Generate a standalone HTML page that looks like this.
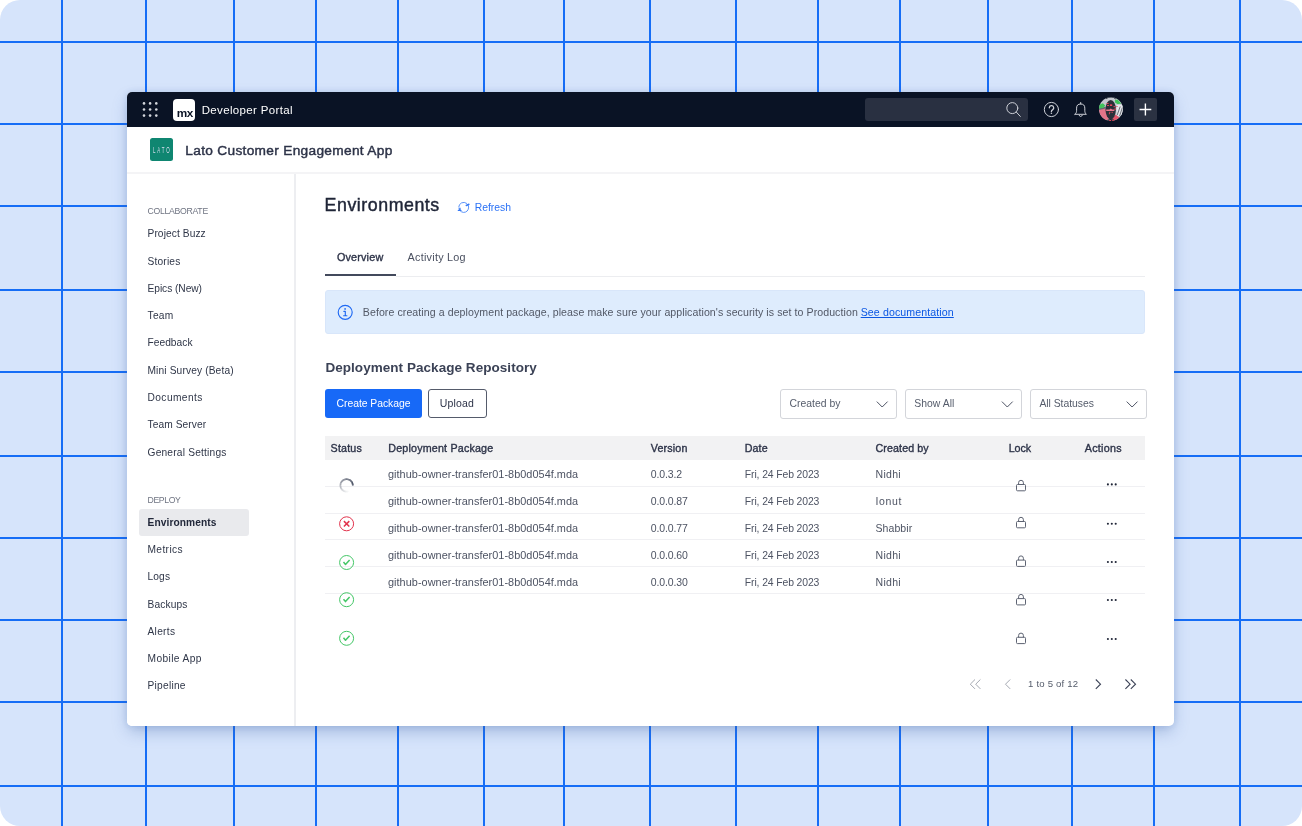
<!DOCTYPE html>
<html lang="en">
<head>
<meta charset="utf-8">
<title>Developer Portal - Environments</title>
<style>
html,body{margin:0;padding:0;background:#fff;}
body{width:1302px;height:826px;overflow:hidden;font-family:"Liberation Sans",Arial,sans-serif;}
.stage{position:absolute;left:0;top:0;width:1302px;height:826px;background:#d6e4fb;border-radius:20px;overflow:hidden;}
.gv,.gh{position:absolute;background:#166df6;}
.gv{top:0;width:2px;height:826px;}
.gh{left:0;height:2px;width:1302px;}
.win{will-change:transform;position:absolute;left:127px;top:92px;width:1047px;height:634px;background:#fff;border-radius:5px;box-shadow:0 7px 16px -2px rgba(60,100,170,.36),0 0 7px rgba(60,100,170,.16);overflow:hidden;}
.t{position:absolute;white-space:nowrap;line-height:1;margin:0;padding:0;}
.abs{position:absolute;}
.topbar{position:absolute;left:0;top:0;width:1047px;height:34.5px;background:#0a1325;}
.apphead{position:absolute;left:0;top:34.5px;width:1047px;height:45.5px;background:#fff;border-bottom:2px solid #f4f4f6;}
.side{position:absolute;left:0;top:82px;width:167px;height:552px;border-right:2px solid #edeef1;background:#fff;}
.sel{position:absolute;left:11.6px;top:416.5px;width:110px;height:27.3px;border-radius:3px;background:#e9eaed;}
.alert{position:absolute;left:197.7px;top:198.2px;width:820.3px;height:43.6px;border-radius:3px;background:#deecfd;box-sizing:border-box;border:1px solid #d8e6fa;}
.btn{position:absolute;top:297.2px;height:29.2px;border-radius:3px;box-sizing:border-box;}
.btn.primary{left:197.7px;width:97.1px;background:#1769f7;}
.btn.ghost{left:301px;width:59px;background:#fff;border:1px solid #555b6b;}
.dd{position:absolute;top:297.2px;height:29.6px;width:116.7px;border:1px solid #d3d5da;border-radius:3px;box-sizing:border-box;background:#fff;}
.thead{position:absolute;left:197.8px;top:344px;width:820.3px;height:24px;background:#f2f2f3;}
.rl{position:absolute;left:197.8px;width:820.3px;height:1px;background:#f0f0f3;}
svg{position:absolute;overflow:visible;}
</style>
</head>
<body>
<div class="stage">
<div class="gv" style="left:61px"></div>
<div class="gv" style="left:145px"></div>
<div class="gv" style="left:233px"></div>
<div class="gv" style="left:315px"></div>
<div class="gv" style="left:397px"></div>
<div class="gv" style="left:483px"></div>
<div class="gv" style="left:563px"></div>
<div class="gv" style="left:649px"></div>
<div class="gv" style="left:735px"></div>
<div class="gv" style="left:817px"></div>
<div class="gv" style="left:899px"></div>
<div class="gv" style="left:987px"></div>
<div class="gv" style="left:1071px"></div>
<div class="gv" style="left:1153px"></div>
<div class="gv" style="left:1239px"></div>
<div class="gh" style="top:41px"></div>
<div class="gh" style="top:123px"></div>
<div class="gh" style="top:205px"></div>
<div class="gh" style="top:289px"></div>
<div class="gh" style="top:371px"></div>
<div class="gh" style="top:455px"></div>
<div class="gh" style="top:537px"></div>
<div class="gh" style="top:619px"></div>
<div class="gh" style="top:701px"></div>
<div class="gh" style="top:785px"></div>
<div class="win">
<header class="topbar">
<svg style="left:-127px;top:-92px" width="1302" height="826" fill="#d3d6dc"><circle cx="144.0" cy="103.4" r="1.3"/><circle cx="150.1" cy="103.4" r="1.3"/><circle cx="156.3" cy="103.4" r="1.3"/><circle cx="144.0" cy="109.5" r="1.3"/><circle cx="150.1" cy="109.5" r="1.3"/><circle cx="156.3" cy="109.5" r="1.3"/><circle cx="144.0" cy="115.6" r="1.3"/><circle cx="150.1" cy="115.6" r="1.3"/><circle cx="156.3" cy="115.6" r="1.3"/></svg>
<div class="abs" style="left:46.30000000000001px;top:6.5px;width:21.9px;height:22px;border-radius:4px;background:#fff"></div>
<span class="t" style="left:49.70px;top:16.15px;font-size:11.8px;font-weight:700;color:#0a1325;letter-spacing:-0.45px;">mx</span>
<span class="t" style="left:74.70px;top:13.15px;font-size:11.5px;font-weight:400;color:#ffffff;letter-spacing:0.350px;">Developer Portal</span>
<div class="abs" style="left:738px;top:6px;width:163px;height:23px;border-radius:3px;background:#293041"></div>
<svg style="left:-127px;top:-92px" width="1302" height="826" fill="none" stroke="#cdd0d7" stroke-width="1" stroke-linecap="round">
<circle cx="1012.3" cy="108.1" r="5.5"/><path d="M1016.3 112.1 L1020.3 116.4"/>
<circle cx="1051.4" cy="109.5" r="7.1"/>
<path d="M1049.3 107.8 a2.2 2.2 0 1 1 3.2 2 c-0.8 0.4 -1.1 0.8 -1.1 1.6" stroke-width="1.3"/>
<circle cx="1051.4" cy="113.2" r="0.8" fill="#cdd0d7" stroke="none"/>
<path d="M1075 114.3 h11.4 c-1.3 -1 -1.6 -2.3 -1.6 -4 v-2.2 a4.1 4.1 0 0 0 -8.2 0 v2.2 c0 1.7 -0.3 3 -1.6 4 z" stroke-linejoin="round"/>
<path d="M1080.7 104 v-1.5 M1079.2 115.4 a1.6 1.6 0 0 0 3 0"/>
</svg>
<svg style="left:967px;top:2px" width="34" height="32" viewBox="0 0 34 32">
<defs><clipPath id="avc"><circle cx="16.95" cy="15.1" r="11.9"/></clipPath></defs>
<g clip-path="url(#avc)">
<rect x="4" y="2" width="27" height="27" fill="#c4c8cf"/>
<path d="M4 15.6 L11.6 14.4 L13 20 L15 25 L11 28 L4 24 Z" fill="#e27489"/><path d="M4.5 14.2 L11.6 12.8 L11.8 14.6 L4.5 16.2 Z" fill="#6a6570"/>
<path d="M5 10.8 L8.9 9.2 L11.2 11.6 L9.8 13.4 L4.6 14.8 Z" fill="#3ec45a"/>
<path d="M20.8 6.3 L23.4 5.4 L27.4 9.4 L23.4 10.3 L21.2 8.2 Z" fill="#3ec45a"/>
<path d="M22.6 10.8 h7 v11 h-7 z" fill="#e6e8ec"/>
<path d="M26.2 12.5 L23.2 21 M28.4 13.5 L25.6 22" stroke="#4a4f59" stroke-width="0.8"/>
<path d="M21.5 20.5 L25.5 23.5 L20.5 27.5 L17.8 25 Z" fill="#e3566b"/>
<ellipse cx="16.7" cy="15.6" rx="5.2" ry="9.6" fill="#2a3039"/>
<path d="M11 27.5 q5.8 -5 11.5 0 z" fill="#1c222b"/>
<path d="M12.2 4.6 a6.2 5 0 0 1 9.6 0.4" stroke="#1c222b" stroke-width="1" fill="none"/>
<rect x="12.6" y="9" width="2" height="0.9" fill="#e8475c"/><rect x="15.9" y="10.4" width="2.3" height="1.6" fill="#e8475c"/><rect x="13" y="11" width="2" height="0.9" fill="#e8475c"/>
<rect x="19.6" y="12" width="1.2" height="1.2" fill="#e8475c"/><rect x="22" y="12" width="1.8" height="1" fill="#e8788d"/>
<path d="M12.2 15.4 h3.2 l1.4 -1 l1.4 1 h2.2 v1.6 h-8.2 z" fill="#e8788d"/>
<rect x="15.2" y="17.8" width="1.1" height="1.1" fill="#e8475c"/><rect x="17.6" y="17.8" width="1.1" height="1.1" fill="#e8475c"/><rect x="14.9" y="19.2" width="1.1" height="1" fill="#e8475c"/><rect x="20.6" y="14.2" width="1" height="1.8" fill="#e8475c"/>
<rect x="15.1" y="26" width="1.9" height="1" fill="#e8475c"/><rect x="18.2" y="26" width="1.9" height="1" fill="#e8475c"/>
</g></svg>
<div class="abs" style="left:1007px;top:6px;width:22.8px;height:23px;border-radius:2px;background:#2b3242"></div>
<svg style="left:-127px;top:-92px" width="1302" height="826" stroke="#fff" stroke-width="1.4" fill="none"><path d="M1145.4 103.6 v11.8 M1139.5 109.5 h11.8"/></svg>
</header>
<div class="apphead"></div>
<div class="abs" style="left:23px;top:46.400000000000006px;width:23.1px;height:22.8px;border-radius:2.5px;background:#0f8671"></div>
<span class="t" style="left:25.90px;top:54.15px;font-size:8.8px;font-weight:400;color:#d9def0;letter-spacing:3.7px;transform:scaleX(.5);transform-origin:0 0;">LATO</span>
<h1 class="t" style="left:58.30px;top:52.15px;font-size:13.7px;font-weight:400;color:#2d3348;letter-spacing:0.311px;-webkit-text-stroke:0.45px #2d3348;">Lato Customer Engagement App</h1>
<nav class="side"></nav>
<div class="sel"></div>
<span class="t" style="left:20.50px;top:115.15px;font-size:8.7px;font-weight:400;color:#6f7482;letter-spacing:-0.288px;">COLLABORATE</span>
<span class="t" style="left:20.50px;top:137.15px;font-size:10.2px;font-weight:400;color:#2f3648;letter-spacing:0.092px;">Project Buzz</span>
<span class="t" style="left:20.50px;top:165.15px;font-size:10.2px;font-weight:400;color:#2f3648;letter-spacing:0.180px;">Stories</span>
<span class="t" style="left:20.50px;top:192.15px;font-size:10.2px;font-weight:400;color:#2f3648;letter-spacing:-0.042px;">Epics (New)</span>
<span class="t" style="left:20.50px;top:219.15px;font-size:10.2px;font-weight:400;color:#2f3648;letter-spacing:0.293px;">Team</span>
<span class="t" style="left:20.50px;top:246.15px;font-size:10.2px;font-weight:400;color:#2f3648;letter-spacing:0.036px;">Feedback</span>
<span class="t" style="left:20.50px;top:274.15px;font-size:10.2px;font-weight:400;color:#2f3648;letter-spacing:0.135px;">Mini Survey (Beta)</span>
<span class="t" style="left:20.50px;top:301.15px;font-size:10.2px;font-weight:400;color:#2f3648;letter-spacing:0.421px;">Documents</span>
<span class="t" style="left:20.50px;top:328.15px;font-size:10.2px;font-weight:400;color:#2f3648;letter-spacing:0.095px;">Team Server</span>
<span class="t" style="left:20.50px;top:356.15px;font-size:10.2px;font-weight:400;color:#2f3648;letter-spacing:0.201px;">General Settings</span>
<span class="t" style="left:20.50px;top:404.15px;font-size:8.7px;font-weight:400;color:#6f7482;letter-spacing:-0.370px;">DEPLOY</span>
<span class="t" style="left:20.50px;top:426.15px;font-size:10.2px;font-weight:700;color:#22283a;letter-spacing:0.097px;">Environments</span>
<span class="t" style="left:20.50px;top:453.15px;font-size:10.2px;font-weight:400;color:#2f3648;letter-spacing:0.379px;">Metrics</span>
<span class="t" style="left:20.50px;top:480.15px;font-size:10.2px;font-weight:400;color:#2f3648;letter-spacing:0.135px;">Logs</span>
<span class="t" style="left:20.50px;top:508.15px;font-size:10.2px;font-weight:400;color:#2f3648;letter-spacing:0.137px;">Backups</span>
<span class="t" style="left:20.50px;top:535.15px;font-size:10.2px;font-weight:400;color:#2f3648;letter-spacing:0.291px;">Alerts</span>
<span class="t" style="left:20.50px;top:562.15px;font-size:10.2px;font-weight:400;color:#2f3648;letter-spacing:0.399px;">Mobile App</span>
<span class="t" style="left:20.50px;top:589.15px;font-size:10.2px;font-weight:400;color:#2f3648;letter-spacing:0.250px;">Pipeline</span>
<h2 class="t" style="left:197.60px;top:105.15px;font-size:17.8px;font-weight:400;color:#1f2537;letter-spacing:0.535px;-webkit-text-stroke:0.45px #1f2537;">Environments</h2>
<svg style="left:-127px;top:-92px" width="1302" height="826" fill="none" stroke="#4a88f7" stroke-width="0.9" stroke-linecap="round" stroke-linejoin="round">
<path d="M468.23 205.29 A5 5 0 1 1 458.87 208.69"/><path d="M458.72 206.96 A5 5 0 0 1 466.57 203.30"/>
<path d="M466.3 205.5 L468.9 204.3" stroke="#3478f6" stroke-width="1.5"/>
<path d="M459.9 208.3 V210.4 M458.4 210.4 H460.9" stroke="#3478f6" stroke-width="1.4"/>
</svg>
<span class="t" style="left:347.70px;top:111.15px;font-size:10.4px;font-weight:400;color:#2b72f6;letter-spacing:-0.015px;">Refresh</span>
<span class="t" style="left:209.90px;top:160.15px;font-size:10.8px;font-weight:400;color:#2d3348;letter-spacing:0.186px;-webkit-text-stroke:0.35px #2d3348;">Overview</span>
<span class="t" style="left:280.60px;top:160.15px;font-size:10.8px;font-weight:400;color:#4a5060;letter-spacing:0.253px;">Activity Log</span>
<div class="abs" style="left:268.8px;top:184px;width:749.2px;height:1px;background:#ecedf0"></div>
<div class="abs" style="left:197.8px;top:182.2px;width:71px;height:2px;background:#434a5c"></div>
<div class="alert"></div>
<svg style="left:-127px;top:-92px" width="1302" height="826" fill="none" stroke="#1f69f3" stroke-width="1.15" stroke-linecap="round">
<circle cx="345.2" cy="312.3" r="7"/><path d="M345.3 311.3 v4.2 M343.8 311.3 h1.5 M343.6 315.7 h3.3"/><circle cx="345.1" cy="308.9" r="0.85" fill="#1f69f3" stroke="none"/></svg>
<span class="t" style="left:235.80px;top:215.15px;font-size:10.6px;font-weight:400;color:#525866;letter-spacing:0.070px;">Before creating a deployment package, please make sure your application's security is set to Production</span>
<a class="t" style="left:733.70px;top:215.15px;font-size:10.6px;font-weight:400;color:#0b57e3;letter-spacing:0.106px;text-decoration:underline;">See documentation</a>
<h3 class="t" style="left:198.40px;top:269.15px;font-size:13.5px;font-weight:700;color:#3b4256;letter-spacing:0.047px;">Deployment Package Repository</h3>
<div class="btn primary"></div><div class="btn ghost"></div>
<span class="t" style="left:209.60px;top:307.15px;font-size:10.4px;font-weight:400;color:#ffffff;letter-spacing:-0.047px;">Create Package</span>
<span class="t" style="left:312.70px;top:306.15px;font-size:10.5px;font-weight:400;color:#2d3348;letter-spacing:0.184px;">Upload</span>
<div class="dd" style="left:653px"></div>
<span class="t" style="left:662.40px;top:307.15px;font-size:10.4px;font-weight:400;color:#555c6b;letter-spacing:0.019px;">Created by</span>
<svg style="left:-127px;top:-92px" width="1302" height="826" fill="none" stroke="#434a5c" stroke-width="0.95"><path d="M876.8000000000001 401.6 l5.4 5.4 l5.4 -5.4"/></svg>
<div class="dd" style="left:778.2px"></div>
<span class="t" style="left:787.20px;top:307.15px;font-size:10.4px;font-weight:400;color:#555c6b;letter-spacing:0.034px;">Show All</span>
<svg style="left:-127px;top:-92px" width="1302" height="826" fill="none" stroke="#434a5c" stroke-width="0.95"><path d="M1001.9 401.6 l5.4 5.4 l5.4 -5.4"/></svg>
<div class="dd" style="left:903.3px"></div>
<span class="t" style="left:912.40px;top:307.15px;font-size:10.4px;font-weight:400;color:#555c6b;letter-spacing:-0.034px;">All Statuses</span>
<svg style="left:-127px;top:-92px" width="1302" height="826" fill="none" stroke="#434a5c" stroke-width="0.95"><path d="M1126.6999999999998 401.6 l5.4 5.4 l5.4 -5.4"/></svg>
<div class="thead"></div>
<span class="t" style="left:203.60px;top:351.15px;font-size:10.7px;font-weight:400;color:#2d3348;letter-spacing:0.177px;-webkit-text-stroke:0.35px #2d3348;">Status</span>
<span class="t" style="left:261.30px;top:351.15px;font-size:10.7px;font-weight:400;color:#2d3348;letter-spacing:0.194px;-webkit-text-stroke:0.35px #2d3348;">Deployment Package</span>
<span class="t" style="left:523.80px;top:351.15px;font-size:10.7px;font-weight:400;color:#2d3348;letter-spacing:0.157px;-webkit-text-stroke:0.35px #2d3348;">Version</span>
<span class="t" style="left:617.80px;top:351.15px;font-size:10.7px;font-weight:400;color:#2d3348;letter-spacing:0.074px;-webkit-text-stroke:0.35px #2d3348;">Date</span>
<span class="t" style="left:748.50px;top:351.15px;font-size:10.7px;font-weight:400;color:#2d3348;letter-spacing:0.102px;-webkit-text-stroke:0.35px #2d3348;">Created by</span>
<span class="t" style="left:881.70px;top:351.15px;font-size:10.7px;font-weight:400;color:#2d3348;letter-spacing:-0.026px;-webkit-text-stroke:0.35px #2d3348;">Lock</span>
<span class="t" style="left:957.80px;top:351.15px;font-size:10.7px;font-weight:400;color:#2d3348;letter-spacing:0.273px;-webkit-text-stroke:0.35px #2d3348;">Actions</span>
<div class="rl" style="top:394px"></div>
<div class="rl" style="top:421px"></div>
<div class="rl" style="top:447px"></div>
<div class="rl" style="top:474px"></div>
<div class="rl" style="top:501px"></div>
<span class="t" style="left:261.00px;top:377.15px;font-size:10.9px;font-weight:400;color:#4d5363;letter-spacing:0.035px;">github-owner-transfer01-8b0d054f.mda</span>
<span class="t" style="left:523.80px;top:377.15px;font-size:10.5px;font-weight:400;color:#4d5363;letter-spacing:-0.154px;">0.0.3.2</span>
<span class="t" style="left:617.80px;top:378.15px;font-size:10.4px;font-weight:400;color:#4d5363;letter-spacing:-0.110px;">Fri, 24 Feb 2023</span>
<span class="t" style="left:748.50px;top:377.15px;font-size:10.5px;font-weight:400;color:#4d5363;letter-spacing:0.316px;">Nidhi</span>
<span class="t" style="left:261.00px;top:404.15px;font-size:10.9px;font-weight:400;color:#4d5363;letter-spacing:0.035px;">github-owner-transfer01-8b0d054f.mda</span>
<span class="t" style="left:523.80px;top:404.15px;font-size:10.5px;font-weight:400;color:#4d5363;letter-spacing:-0.136px;">0.0.0.87</span>
<span class="t" style="left:617.80px;top:405.15px;font-size:10.4px;font-weight:400;color:#4d5363;letter-spacing:-0.110px;">Fri, 24 Feb 2023</span>
<span class="t" style="left:748.50px;top:404.15px;font-size:10.5px;font-weight:400;color:#4d5363;letter-spacing:0.635px;">Ionut</span>
<span class="t" style="left:261.00px;top:431.15px;font-size:10.9px;font-weight:400;color:#4d5363;letter-spacing:0.035px;">github-owner-transfer01-8b0d054f.mda</span>
<span class="t" style="left:523.80px;top:431.15px;font-size:10.5px;font-weight:400;color:#4d5363;letter-spacing:-0.136px;">0.0.0.77</span>
<span class="t" style="left:617.80px;top:432.15px;font-size:10.4px;font-weight:400;color:#4d5363;letter-spacing:-0.110px;">Fri, 24 Feb 2023</span>
<span class="t" style="left:748.50px;top:431.15px;font-size:10.5px;font-weight:400;color:#4d5363;letter-spacing:0.083px;">Shabbir</span>
<span class="t" style="left:261.00px;top:458.15px;font-size:10.9px;font-weight:400;color:#4d5363;letter-spacing:0.035px;">github-owner-transfer01-8b0d054f.mda</span>
<span class="t" style="left:523.80px;top:458.15px;font-size:10.5px;font-weight:400;color:#4d5363;letter-spacing:-0.136px;">0.0.0.60</span>
<span class="t" style="left:617.80px;top:459.15px;font-size:10.4px;font-weight:400;color:#4d5363;letter-spacing:-0.110px;">Fri, 24 Feb 2023</span>
<span class="t" style="left:748.50px;top:458.15px;font-size:10.5px;font-weight:400;color:#4d5363;letter-spacing:0.316px;">Nidhi</span>
<span class="t" style="left:261.00px;top:485.15px;font-size:10.9px;font-weight:400;color:#4d5363;letter-spacing:0.035px;">github-owner-transfer01-8b0d054f.mda</span>
<span class="t" style="left:523.80px;top:485.15px;font-size:10.5px;font-weight:400;color:#4d5363;letter-spacing:-0.136px;">0.0.0.30</span>
<span class="t" style="left:617.80px;top:486.15px;font-size:10.4px;font-weight:400;color:#4d5363;letter-spacing:-0.110px;">Fri, 24 Feb 2023</span>
<span class="t" style="left:748.50px;top:485.15px;font-size:10.5px;font-weight:400;color:#4d5363;letter-spacing:0.316px;">Nidhi</span>
<svg style="left:-127px;top:-92px" width="1302" height="826" fill="none"><path d="M352.80 485.40 A6.2 6.2 0 0 0 352.73 484.50" stroke="#3b4256" stroke-opacity="1.00" stroke-width="1.7"/><path d="M352.75 484.62 A6.2 6.2 0 0 0 352.57 483.73" stroke="#3b4256" stroke-opacity="0.97" stroke-width="1.7"/><path d="M352.60 483.85 A6.2 6.2 0 0 0 352.31 482.99" stroke="#3b4256" stroke-opacity="0.95" stroke-width="1.7"/><path d="M352.36 483.10 A6.2 6.2 0 0 0 351.96 482.29" stroke="#3b4256" stroke-opacity="0.92" stroke-width="1.7"/><path d="M352.02 482.39 A6.2 6.2 0 0 0 351.53 481.64" stroke="#3b4256" stroke-opacity="0.89" stroke-width="1.7"/><path d="M351.60 481.73 A6.2 6.2 0 0 0 351.02 481.05" stroke="#3b4256" stroke-opacity="0.86" stroke-width="1.7"/><path d="M351.10 481.13 A6.2 6.2 0 0 0 350.43 480.53" stroke="#3b4256" stroke-opacity="0.84" stroke-width="1.7"/><path d="M350.52 480.60 A6.2 6.2 0 0 0 349.79 480.08" stroke="#3b4256" stroke-opacity="0.81" stroke-width="1.7"/><path d="M349.89 480.14 A6.2 6.2 0 0 0 349.09 479.72" stroke="#3b4256" stroke-opacity="0.78" stroke-width="1.7"/><path d="M349.20 479.77 A6.2 6.2 0 0 0 348.35 479.45" stroke="#3b4256" stroke-opacity="0.76" stroke-width="1.7"/><path d="M348.46 479.49 A6.2 6.2 0 0 0 347.59 479.28" stroke="#3b4256" stroke-opacity="0.73" stroke-width="1.7"/><path d="M347.70 479.30 A6.2 6.2 0 0 0 346.81 479.20" stroke="#3b4256" stroke-opacity="0.70" stroke-width="1.7"/><path d="M346.92 479.21 A6.2 6.2 0 0 0 346.02 479.23" stroke="#3b4256" stroke-opacity="0.68" stroke-width="1.7"/><path d="M346.14 479.22 A6.2 6.2 0 0 0 345.25 479.35" stroke="#3b4256" stroke-opacity="0.65" stroke-width="1.7"/><path d="M345.36 479.32 A6.2 6.2 0 0 0 344.50 479.57" stroke="#3b4256" stroke-opacity="0.62" stroke-width="1.7"/><path d="M344.61 479.53 A6.2 6.2 0 0 0 343.78 479.88" stroke="#3b4256" stroke-opacity="0.60" stroke-width="1.7"/><path d="M343.88 479.83 A6.2 6.2 0 0 0 343.10 480.28" stroke="#3b4256" stroke-opacity="0.57" stroke-width="1.7"/><path d="M343.20 480.22 A6.2 6.2 0 0 0 342.48 480.76" stroke="#3b4256" stroke-opacity="0.54" stroke-width="1.7"/><path d="M342.57 480.69 A6.2 6.2 0 0 0 341.93 481.32" stroke="#3b4256" stroke-opacity="0.52" stroke-width="1.7"/><path d="M342.01 481.23 A6.2 6.2 0 0 0 341.45 481.94" stroke="#3b4256" stroke-opacity="0.49" stroke-width="1.7"/><path d="M341.52 481.84 A6.2 6.2 0 0 0 341.06 482.62" stroke="#3b4256" stroke-opacity="0.47" stroke-width="1.7"/><path d="M341.11 482.51 A6.2 6.2 0 0 0 340.75 483.34" stroke="#3b4256" stroke-opacity="0.44" stroke-width="1.7"/><path d="M340.79 483.23 A6.2 6.2 0 0 0 340.54 484.09" stroke="#3b4256" stroke-opacity="0.42" stroke-width="1.7"/><path d="M340.57 483.98 A6.2 6.2 0 0 0 340.42 484.87" stroke="#3b4256" stroke-opacity="0.39" stroke-width="1.7"/><path d="M340.43 484.75 A6.2 6.2 0 0 0 340.41 485.65" stroke="#3b4256" stroke-opacity="0.36" stroke-width="1.7"/><path d="M340.40 485.54 A6.2 6.2 0 0 0 340.49 486.43" stroke="#3b4256" stroke-opacity="0.34" stroke-width="1.7"/><path d="M340.47 486.32 A6.2 6.2 0 0 0 340.67 487.20" stroke="#3b4256" stroke-opacity="0.32" stroke-width="1.7"/><path d="M340.63 487.08 A6.2 6.2 0 0 0 340.94 487.93" stroke="#3b4256" stroke-opacity="0.29" stroke-width="1.7"/><path d="M340.89 487.82 A6.2 6.2 0 0 0 341.30 488.62" stroke="#3b4256" stroke-opacity="0.27" stroke-width="1.7"/><path d="M341.24 488.52 A6.2 6.2 0 0 0 341.75 489.27" stroke="#3b4256" stroke-opacity="0.24" stroke-width="1.7"/><path d="M341.68 489.17 A6.2 6.2 0 0 0 342.28 489.85" stroke="#3b4256" stroke-opacity="0.22" stroke-width="1.7"/><path d="M342.20 489.76 A6.2 6.2 0 0 0 342.88 490.36" stroke="#3b4256" stroke-opacity="0.19" stroke-width="1.7"/><path d="M342.78 490.29 A6.2 6.2 0 0 0 343.53 490.79" stroke="#3b4256" stroke-opacity="0.17" stroke-width="1.7"/><path d="M343.43 490.73 A6.2 6.2 0 0 0 344.24 491.13" stroke="#3b4256" stroke-opacity="0.15" stroke-width="1.7"/><path d="M344.13 491.09 A6.2 6.2 0 0 0 344.98 491.38" stroke="#3b4256" stroke-opacity="0.12" stroke-width="1.7"/><path d="M344.87 491.35 A6.2 6.2 0 0 0 345.75 491.54" stroke="#3b4256" stroke-opacity="0.10" stroke-width="1.7"/><path d="M345.63 491.52 A6.2 6.2 0 0 0 346.53 491.60" stroke="#3b4256" stroke-opacity="0.08" stroke-width="1.7"/><path d="M346.41 491.60 A6.2 6.2 0 0 0 347.31 491.56" stroke="#3b4256" stroke-opacity="0.06" stroke-width="1.7"/><path d="M347.19 491.57 A6.2 6.2 0 0 0 348.08 491.42" stroke="#3b4256" stroke-opacity="0.04" stroke-width="1.7"/><path d="M347.97 491.45 A6.2 6.2 0 0 0 348.83 491.18" stroke="#3b4256" stroke-opacity="0.02" stroke-width="1.7"/><circle cx="346.6" cy="523.8" r="7" stroke="#e2334d" stroke-width="1"/><path d="M343.9 521.0999999999999 l5.4 5.4 M349.3 521.0999999999999 l-5.4 5.4" stroke="#e2334d" stroke-width="1.5"/><circle cx="346.6" cy="562.5" r="7" stroke="#44c767" stroke-width="1"/><path d="M343.5 562.0 L345.5 564.4 L349.6 559.9" stroke="#44c767" stroke-width="1.5" stroke-linejoin="round"/><circle cx="346.6" cy="599.7" r="7" stroke="#44c767" stroke-width="1"/><path d="M343.5 599.2 L345.5 601.6 L349.6 597.1" stroke="#44c767" stroke-width="1.5" stroke-linejoin="round"/><circle cx="346.6" cy="638.3" r="7" stroke="#44c767" stroke-width="1"/><path d="M343.5 637.8 L345.5 640.1999999999999 L349.6 635.6999999999999" stroke="#44c767" stroke-width="1.5" stroke-linejoin="round"/><rect x="1016.5" y="484.5" width="9" height="6.3" rx="1" stroke="#5d6372" stroke-width="1"/><path d="M1018.6 484.5 v-1.8 a2.4 2.4 0 0 1 4.8 0 v1.8" stroke="#5d6372" stroke-width="1"/><rect x="1016.5" y="521.5" width="9" height="6.3" rx="1" stroke="#5d6372" stroke-width="1"/><path d="M1018.6 521.5 v-1.8 a2.4 2.4 0 0 1 4.8 0 v1.8" stroke="#5d6372" stroke-width="1"/><rect x="1016.5" y="560.1" width="9" height="6.3" rx="1" stroke="#5d6372" stroke-width="1"/><path d="M1018.6 560.1 v-1.8 a2.4 2.4 0 0 1 4.8 0 v1.8" stroke="#5d6372" stroke-width="1"/><rect x="1016.5" y="598.6" width="9" height="6.3" rx="1" stroke="#5d6372" stroke-width="1"/><path d="M1018.6 598.6 v-1.8 a2.4 2.4 0 0 1 4.8 0 v1.8" stroke="#5d6372" stroke-width="1"/><rect x="1016.5" y="637.3" width="9" height="6.3" rx="1" stroke="#5d6372" stroke-width="1"/><path d="M1018.6 637.3 v-1.8 a2.4 2.4 0 0 1 4.8 0 v1.8" stroke="#5d6372" stroke-width="1"/><circle cx="1107.8999999999999" cy="484.4" r="1.05" fill="#1f2537"/><circle cx="1111.8" cy="484.4" r="1.05" fill="#1f2537"/><circle cx="1115.7" cy="484.4" r="1.05" fill="#1f2537"/><circle cx="1107.8999999999999" cy="523.7" r="1.05" fill="#1f2537"/><circle cx="1111.8" cy="523.7" r="1.05" fill="#1f2537"/><circle cx="1115.7" cy="523.7" r="1.05" fill="#1f2537"/><circle cx="1107.8999999999999" cy="562.0" r="1.05" fill="#1f2537"/><circle cx="1111.8" cy="562.0" r="1.05" fill="#1f2537"/><circle cx="1115.7" cy="562.0" r="1.05" fill="#1f2537"/><circle cx="1107.8999999999999" cy="600.0" r="1.05" fill="#1f2537"/><circle cx="1111.8" cy="600.0" r="1.05" fill="#1f2537"/><circle cx="1115.7" cy="600.0" r="1.05" fill="#1f2537"/><circle cx="1107.8999999999999" cy="639.0" r="1.05" fill="#1f2537"/><circle cx="1111.8" cy="639.0" r="1.05" fill="#1f2537"/><circle cx="1115.7" cy="639.0" r="1.05" fill="#1f2537"/></svg>
<svg style="left:-127px;top:-92px" width="1302" height="826" fill="none" stroke-width="1" stroke-linejoin="miter">
<path d="M975 679.5 l-4.7 4.7 l4.7 4.7 M980.4 679.5 l-4.7 4.7 l4.7 4.7" stroke="#a4a8b1"/>
<path d="M1010.2 679.5 l-4.7 4.7 l4.7 4.7" stroke="#a4a8b1"/>
<path d="M1095.8 679.5 l4.7 4.7 l-4.7 4.7" stroke="#3b4256" stroke-width="1.1"/>
<path d="M1125.4 679.5 l4.7 4.7 l-4.7 4.7 M1130.8 679.5 l4.7 4.7 l-4.7 4.7" stroke="#3b4256" stroke-width="1.1"/>
</svg>
<span class="t" style="left:901.10px;top:587.15px;font-size:9.6px;font-weight:400;color:#555c6b;letter-spacing:0.189px;">1 to 5 of 12</span>
</div></div>
</body>
</html>
